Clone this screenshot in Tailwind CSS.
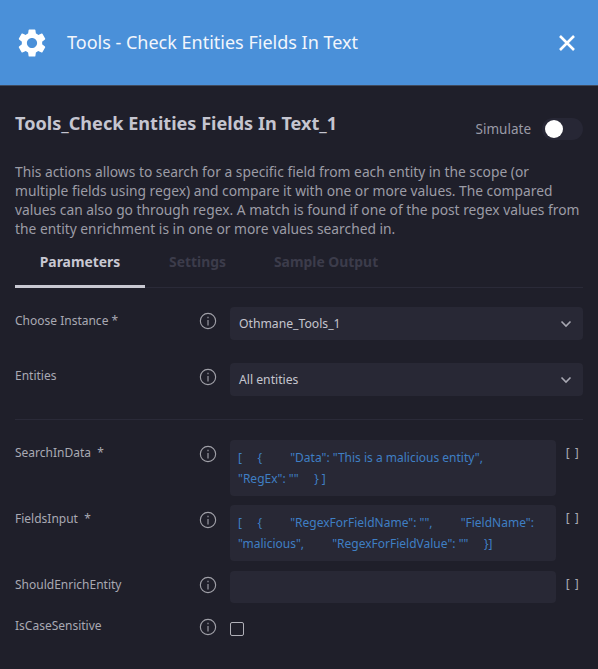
<!doctype html>
<html><head><meta charset="utf-8"><script src="https://cdn.jsdelivr.net/npm/@tailwindcss/browser@4"></script></head>
<body class="w-[598px] h-[669px] overflow-hidden bg-[#1f1f2a] font-['Noto_Sans','Open_Sans',sans-serif]">
<header class="h-[86px] bg-[#4a90d9] flex items-center pl-[15px] pr-[21px] border-b border-[#3f4a5e]">
  <svg class="w-[34px] h-[34px]" viewBox="0 0 24 24" fill="#fff"><path d="M19.14 12.94c.04-.3.06-.61.06-.94 0-.32-.02-.64-.07-.94l2.03-1.58a.49.49 0 0 0 .12-.61l-1.92-3.32a.488.488 0 0 0-.59-.22l-2.39.96c-.5-.38-1.03-.7-1.62-.94l-.36-2.54a.484.484 0 0 0-.48-.41h-3.84c-.24 0-.43.17-.47.41l-.36 2.54c-.59.24-1.13.57-1.62.94l-2.39-.96c-.22-.08-.47 0-.59.22L2.74 8.87c-.12.21-.08.47.12.61l2.03 1.58c-.05.3-.09.63-.09.94s.02.64.07.94l-2.03 1.58a.49.49 0 0 0-.12.61l1.92 3.32c.12.22.37.29.59.22l2.39-.96c.5.38 1.03.7 1.62.94l.36 2.54c.05.24.24.41.48.41h3.84c.24 0 .44-.17.47-.41l.36-2.54c.59-.24 1.13-.56 1.62-.94l2.39.96c.22.08.47 0 .59-.22l1.92-3.32c.12-.22.07-.47-.12-.61l-2.01-1.58zM12 15.6c-1.98 0-3.6-1.62-3.6-3.6s1.62-3.6 3.6-3.6 3.6 1.62 3.6 3.6-1.62 3.6-3.6 3.6z"/></svg>
  <h1 class="ml-[18px] text-[18px] text-[#f2f6fc] flex-1 whitespace-nowrap">Tools - Check Entities Fields In Text</h1>
  <svg class="w-[20px] h-[20px]" viewBox="0 0 20 20" stroke="#fff" stroke-width="2.6" fill="none"><path d="M3 3l14 14M17 3L3 17"/></svg>
</header>
<main class="px-[15px]">
  <div class="flex items-center justify-between h-[74px]">
    <h2 class="text-[18.1px] font-bold text-[#c5c5d0] mt-[2px] whitespace-nowrap">Tools_Check Entities Fields In Text_1</h2>
    <div class="flex items-center mt-[12px]">
      <span class="text-[13.5px] text-[#9a9aa6]">Simulate</span>
      <span class="relative ml-[11px] w-[41px] h-[22px] rounded-full bg-[#272735]">
        <span class="absolute left-[3px] top-[2px] w-[18px] h-[18px] rounded-full bg-white"></span>
      </span>
    </div>
  </div>
  <p class="text-[13.8px] leading-[19px] text-[#9c9ca6] mt-[2px] w-[570px]">This actions allows to search for a specific field from each entity in the scope (or multiple fields using regex) and compare it with one or more values. The compared values can also go through regex. A match is found if one of the post regex values from the entity enrichment is in one or more values searched in.</p>
  <nav class="mt-[11px] h-[39px] flex border-b border-[#2a2a38] text-[13.9px] font-bold relative">
    <span class="w-[130px] pt-[3px] text-center text-[#c8c8d2] border-b-[3px] border-[#c8c8d2] h-[39px]">Parameters</span>
    <span class="ml-[24px] pt-[3px] text-[#3c3c4b]">Settings</span>
    <span class="ml-[48px] pt-[3px] text-[#3c3c4b]">Sample Output</span>
  </nav>
  <div class="mt-[19px] flex">
    <label class="w-[184px] shrink-0 text-[12px] text-[#a9a9b3] leading-[18px] pt-[5px]">Choose Instance *</label>
    <svg class="w-[18px] h-[18px] shrink-0 mt-[5px]" viewBox="0 0 16 16" fill="none" stroke="#a0a0a8" stroke-width="1"><circle cx="8" cy="8" r="6.8"/><path d="M8 7v5M8 4.2v1.4"/></svg>
    <div class="ml-[13px] w-[353px] shrink-0 h-[33px] rounded-[4px] bg-[#282835] flex items-center justify-between pt-px pl-[9px] pr-[11px] text-[12.2px] text-[#c5c5ce]"><span>Othmane_Tools_1</span><svg class="w-[12px] h-[8px]" viewBox="0 0 12 8" fill="none" stroke="#a8a8b2" stroke-width="1.6"><path d="M1.5 1.5L6 6l4.5-4.5"/></svg></div>
  </div>
  <div class="mt-[23px] flex">
    <label class="w-[184px] shrink-0 text-[12px] text-[#a9a9b3] leading-[18px] pt-[4px]">Entities</label>
    <svg class="w-[18px] h-[18px] shrink-0 mt-[5px]" viewBox="0 0 16 16" fill="none" stroke="#a0a0a8" stroke-width="1"><circle cx="8" cy="8" r="6.8"/><path d="M8 7v5M8 4.2v1.4"/></svg>
    <div class="ml-[13px] w-[353px] shrink-0 h-[33px] rounded-[4px] bg-[#282835] flex items-center justify-between pt-px pl-[9px] pr-[11px] text-[12.2px] text-[#c5c5ce]"><span>All entities</span><svg class="w-[12px] h-[8px]" viewBox="0 0 12 8" fill="none" stroke="#a8a8b2" stroke-width="1.6"><path d="M1.5 1.5L6 6l4.5-4.5"/></svg></div>
  </div>
  <hr class="mt-[23px] border-0 h-px bg-[#2a2a38]">
  <div class="mt-[20px] flex">
    <label class="w-[184px] shrink-0 text-[12px] text-[#a9a9b3] leading-[18px] pt-[4px] whitespace-pre">SearchInData  *</label>
    <svg class="w-[18px] h-[18px] shrink-0 mt-[5px]" viewBox="0 0 16 16" fill="none" stroke="#a0a0a8" stroke-width="1"><circle cx="8" cy="8" r="6.8"/><path d="M8 7v5M8 4.2v1.4"/></svg>
    <div class="ml-[13px] w-[326px] shrink-0 h-[56px] rounded-[4px] bg-[#282835] px-[8px] pt-[7px] text-[12px] leading-[21px] text-[#3f7fc4] whitespace-pre-wrap">[     {         "Data": "This is a malicious entity",         "RegEx": ""     } ]</div>
    <span class="ml-[8px] mt-[5px] text-[12px] text-[#a9a9b3] font-['DejaVu_Sans_Mono',monospace] tracking-[2px]">[]</span>
  </div>
  <div class="mt-[9px] flex">
    <label class="w-[184px] shrink-0 text-[12px] text-[#a9a9b3] leading-[18px] pt-[5px] whitespace-pre">FieldsInput  *</label>
    <svg class="w-[18px] h-[18px] shrink-0 mt-[6px]" viewBox="0 0 16 16" fill="none" stroke="#a0a0a8" stroke-width="1"><circle cx="8" cy="8" r="6.8"/><path d="M8 7v5M8 4.2v1.4"/></svg>
    <div class="ml-[13px] w-[326px] shrink-0 h-[56px] rounded-[4px] bg-[#282835] px-[8px] pt-[7px] text-[12px] leading-[21px] text-[#3f7fc4] whitespace-pre-wrap">[     {         "RegexForFieldName": "",         "FieldName": "malicious",         "RegexForFieldValue": ""     }]</div>
    <span class="ml-[8px] mt-[5px] text-[12px] text-[#a9a9b3] font-['DejaVu_Sans_Mono',monospace] tracking-[2px]">[]</span>
  </div>
  <div class="mt-[10px] flex">
    <label class="w-[184px] shrink-0 text-[12px] text-[#a9a9b3] leading-[18px] pt-[5px]">ShouldEnrichEntity</label>
    <svg class="w-[18px] h-[18px] shrink-0 mt-[5px]" viewBox="0 0 16 16" fill="none" stroke="#a0a0a8" stroke-width="1"><circle cx="8" cy="8" r="6.8"/><path d="M8 7v5M8 4.2v1.4"/></svg>
    <div class="ml-[13px] w-[326px] shrink-0 h-[32px] rounded-[4px] bg-[#282835]"></div>
    <span class="ml-[8px] mt-[5px] text-[12px] text-[#a9a9b3] font-['DejaVu_Sans_Mono',monospace] tracking-[2px]">[]</span>
  </div>
  <div class="mt-[13px] flex">
    <label class="w-[184px] shrink-0 text-[12px] text-[#a9a9b3] leading-[18px] pt-px">IsCaseSensitive</label>
    <svg class="w-[18px] h-[18px] shrink-0 mt-[2px]" viewBox="0 0 16 16" fill="none" stroke="#a0a0a8" stroke-width="1"><circle cx="8" cy="8" r="6.8"/><path d="M8 7v5M8 4.2v1.4"/></svg>
    <span class="ml-[13px] mt-[6px] w-[14px] h-[14px] rounded-[2px] border border-[#b0b0b8]"></span>
  </div>
</main>
</body></html>
